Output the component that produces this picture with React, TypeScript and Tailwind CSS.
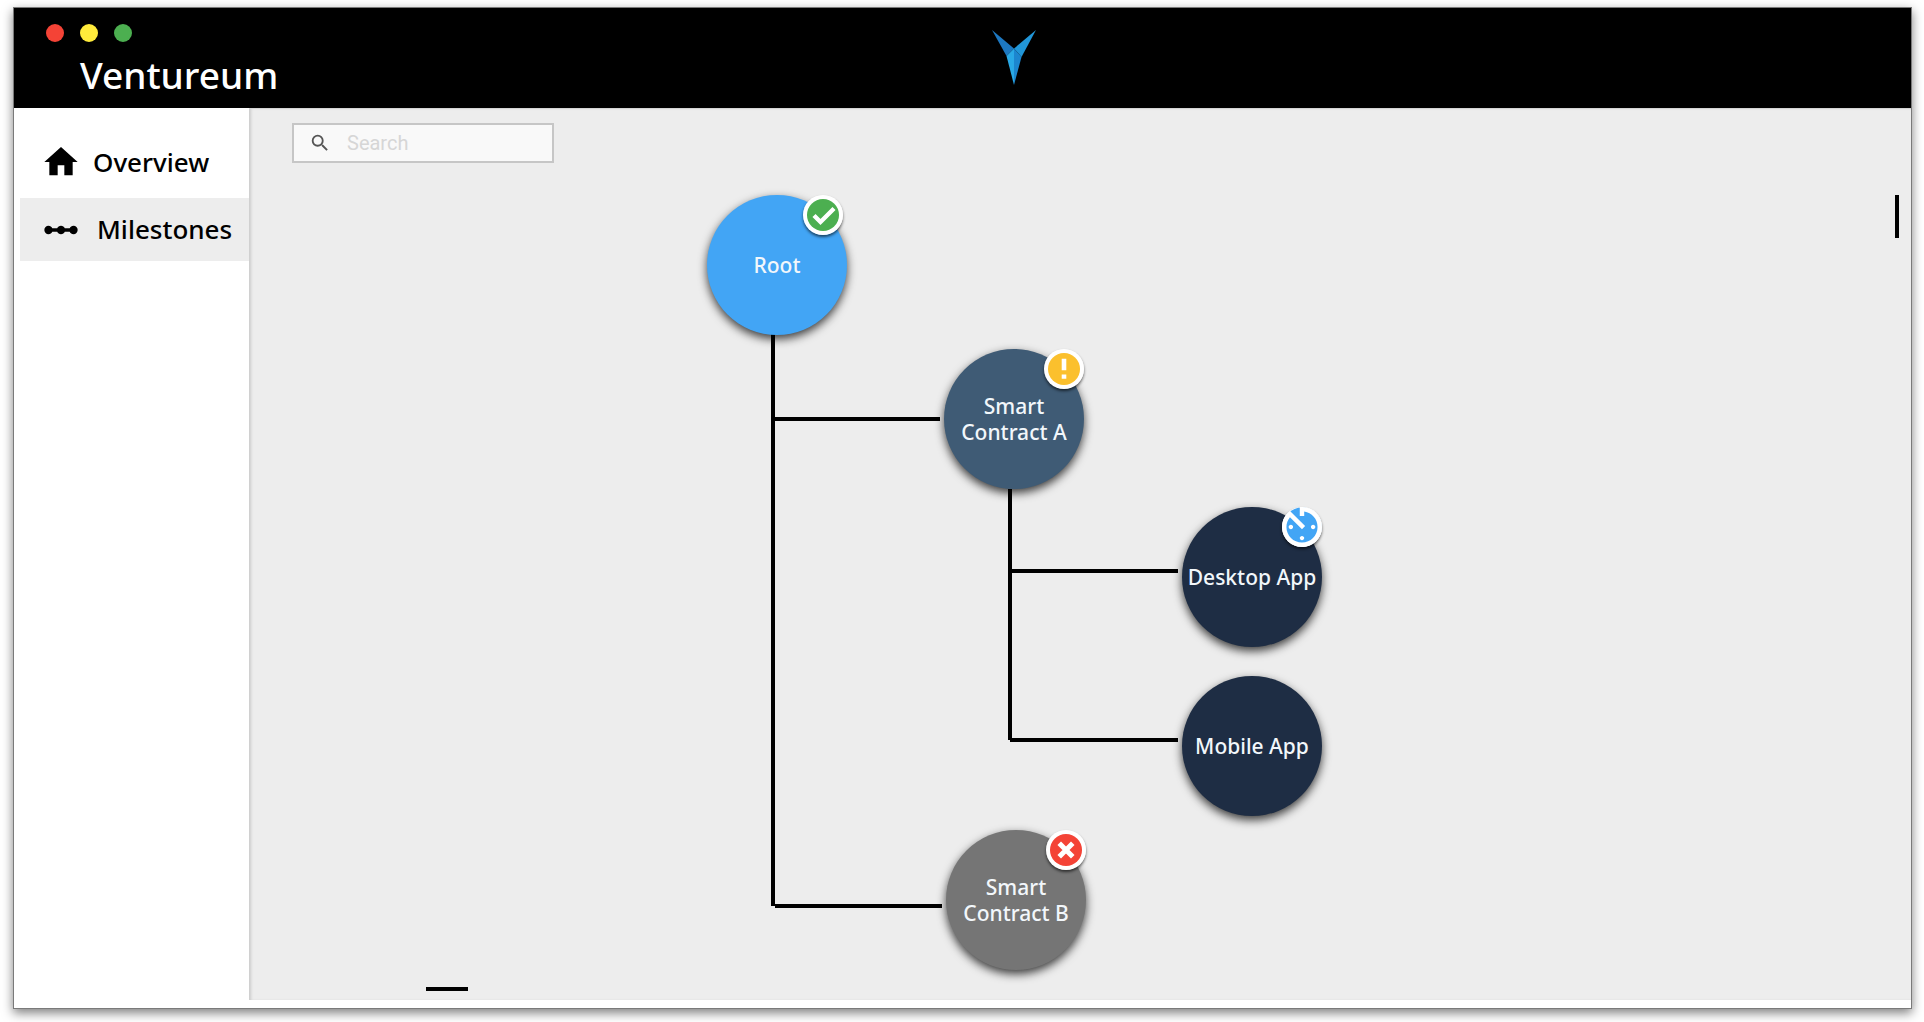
import React from "react";
import { MdHome, MdLinearScale, MdSearch } from "react-icons/md";

type Status = "done" | "warning" | "pending" | "failed";

type MilestoneNode = {
  id: string;
  lines: string[];
  place: string;
  color: string;
  status?: Status;
  badgePlace?: string;
};

const nodes: MilestoneNode[] = [
  { id: "root", lines: ["Root"], place: "left-[458px] top-[86px]", color: "bg-[#42a5f5]", status: "done", badgePlace: "right-1 top-0" },
  { id: "contract-a", lines: ["Smart", "Contract A"], place: "left-[695px] top-[240px]", color: "bg-[#3f5b75]", status: "warning", badgePlace: "right-0 top-0" },
  { id: "desktop", lines: ["Desktop App"], place: "left-[933px] top-[398px]", color: "bg-[#1e2d44]", status: "pending", badgePlace: "right-0 top-0" },
  { id: "mobile", lines: ["Mobile App"], place: "left-[933px] top-[567px]", color: "bg-[#1e2d44]" },
  { id: "contract-b", lines: ["Smart", "Contract B"], place: "left-[697px] top-[721px]", color: "bg-[#757575]", status: "failed", badgePlace: "right-0 top-0" },
];

function StatusBadge({ status }: { status: Status }) {
  return (
    <svg viewBox="0 0 40 40" className="size-10" aria-label={status} role="img">
      <circle cx="20" cy="20" r="20" fill="#fff" />
      {status === "done" && (
        <>
          <circle cx="20" cy="20" r="16" fill="#4caf50" />
          <path d="M11 20.5 17.5 27 31 13.5" fill="none" stroke="#fff" strokeWidth="4.4" />
        </>
      )}
      {status === "warning" && (
        <>
          <circle cx="20" cy="20" r="16" fill="#fbc02d" />
          <path d="M17.7 9.7h4.6v11.6h-4.6zM17.7 25.6h4.6v4.2h-4.6z" fill="#fff" />
        </>
      )}
      {status === "failed" && (
        <>
          <circle cx="20" cy="20" r="16" fill="#f44336" />
          <path d="m15 15 10 10M25 15 15 25" stroke="#fff" strokeWidth="5" strokeLinecap="square" />
        </>
      )}
      {status === "pending" && (
        <>
          <circle cx="20" cy="20" r="19.5" fill="#42a5f5" />
          <path
            transform="translate(-6.67 -6.67) scale(2.2222)"
            fill="#fff"
            d="M11 17c0 .55.45 1 1 1s1-.45 1-1-.45-1-1-1-1 .45-1 1zm0-14v4h2V5.08c3.39.49 6 3.39 6 6.92 0 3.87-3.13 7-7 7s-7-3.13-7-7c0-1.68.59-3.22 1.58-4.42L12 13l1.41-1.41-6.8-6.8v.02C4.42 6.45 3 9.05 3 12c0 4.97 4.02 9 9 9 4.97 0 9-4.03 9-9s-4.03-9-9-9h-1zm7 9c0-.55-.45-1-1-1s-1 .45-1 1 .45 1 1 1 1-.45 1-1zM6 12c0 .55.45 1 1 1s1-.45 1-1-.45-1-1-1-1 .45-1 1z"
          />
        </>
      )}
    </svg>
  );
}

function Logo() {
  return (
    <svg viewBox="0 0 44 56" className="h-14 w-11" aria-label="Ventureum logo" role="img">
      <path d="M0 0 22 18.5 14.5 26z" fill="#1d78c1" />
      <path d="M44 0 22 18.5 29.5 27z" fill="#2196d8" />
      <path d="M22 18.5 14.5 26 22 55z" fill="#29a9e6" />
      <path d="M22 18.5 29.5 27 22 55z" fill="#1c86cf" />
    </svg>
  );
}

function Connectors() {
  return (
    <svg className="absolute left-0 top-0 h-[820px] w-[940px]" viewBox="0 0 940 820" fill="none" stroke="#000" strokeWidth="4" aria-hidden="true">
      <path d="M524 220V797M526 310H691M526 797H693" />
      <path d="M761 380V631M761 462H929M761 631H929" />
    </svg>
  );
}

export default function App() {
  return (
    <div className="flex min-h-screen flex-col bg-white pt-2 pr-[13px] pb-[14px] pl-[14px] font-['Noto_Sans','Open_Sans',sans-serif]">
      <div className="flex flex-1 flex-col bg-white shadow-[0_0_0_1px_#7a7a7a,0_4px_10px_1px_rgba(0,0,0,0.5)]">
        <header className="flex h-[100px] bg-black">
          <div className="w-80 shrink-0 pt-4 pl-8">
            <div className="flex gap-4">
              <button type="button" aria-label="Close" className="size-[18px] rounded-full bg-[#f44336]" />
              <button type="button" aria-label="Minimize" className="size-[18px] rounded-full bg-[#ffeb3b]" />
              <button type="button" aria-label="Maximize" className="size-[18px] rounded-full bg-[#4caf50]" />
            </div>
            <h1 className="mt-3 pl-[34px] text-[37px] leading-[42px] font-medium text-white">Ventureum</h1>
          </div>
          <div className="flex flex-1 justify-center pt-[22px] pr-[218px]">
            <Logo />
          </div>
        </header>

        <div className="flex flex-1">
          <nav className="w-[235px] shrink-0 pt-5 pl-1.5">
            <a href="#overview" className="mb-0.5 flex h-[68px] items-center pl-[21px] text-[26px] font-medium text-black">
              <MdHome className="size-10" />
              <span className="pl-3">Overview</span>
            </a>
            <a href="#milestones" aria-current="page" className="flex h-[63px] items-center bg-[#ededed] pl-[21px] text-[26px] font-medium text-black">
              <MdLinearScale className="size-10" />
              <span className="pl-4">Milestones</span>
            </a>
          </nav>

          <main className="relative mb-2 min-h-[880px] flex-1 border-t border-[#d4d4d4] bg-[#ededed] shadow-[inset_3px_0_3px_-1px_rgba(0,0,0,0.14)]">
            <label className="mt-[14px] ml-[43px] flex h-10 w-[262px] items-center gap-4 border-2 border-[#c6c6c6] bg-[#f9f9f9] pl-[15px]">
              <MdSearch className="size-[22px] shrink-0 text-[#555]" />
              <input type="search" aria-label="Search" placeholder="Search" className="w-full min-w-0 bg-transparent font-[Roboto,sans-serif] text-xl outline-none placeholder:text-[#d6d6d6]" />
            </label>

            <Connectors />

            {nodes.map((node) => (
              <button
                key={node.id}
                type="button"
                className={`absolute flex size-[140px] flex-col items-center justify-center rounded-full text-[21px] leading-[26px] font-medium whitespace-nowrap text-[#f2f7fb] shadow-[0_4px_10px_rgba(0,0,0,0.75)] ${node.place} ${node.color}`}
              >
                {node.lines.map((line) => (
                  <span key={line}>{line}</span>
                ))}
                {node.status && (
                  <span className={`absolute rounded-full shadow-[0_2px_3px_rgba(0,0,0,0.6)] ${node.badgePlace}`}>
                    <StatusBadge status={node.status} />
                  </span>
                )}
              </button>
            ))}

            <div className="absolute top-[86px] right-3 h-[43px] w-1 bg-black" />
            <div className="absolute bottom-[9px] left-[177px] h-1 w-[42px] bg-black" />
          </main>
        </div>
      </div>
    </div>
  );
}
